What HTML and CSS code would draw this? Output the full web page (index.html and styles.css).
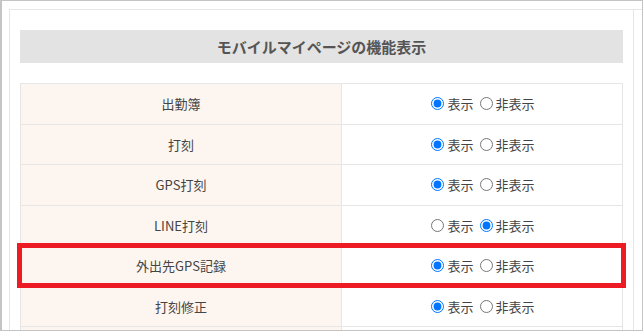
FILE: index.html
```html
<!DOCTYPE html>
<html lang="ja">
<head>
    <meta charset="UTF-8">
    <meta name="viewport" content="width=device-width, initial-scale=1.0">
    <title>モバイルマイページの機能表示</title>
    <link rel="stylesheet" href="styles.css">
</head>
<body>
    <div class="frame">
        <div class="panel">
            <div class="panel-body">
                <h2 class="section-title">モバイルマイページの機能表示</h2>
                <div class="table-wrap">
                    <table class="settings">
                        <tr>
                            <th>出勤簿</th>
                            <td>
                                <div class="choices">
                                    <label><input type="radio" name="r1" checked>表示</label>
                                    <label><input type="radio" name="r1">非表示</label>
                                </div>
                            </td>
                        </tr>
                        <tr>
                            <th>打刻</th>
                            <td>
                                <div class="choices">
                                    <label><input type="radio" name="r2" checked>表示</label>
                                    <label><input type="radio" name="r2">非表示</label>
                                </div>
                            </td>
                        </tr>
                        <tr>
                            <th>GPS打刻</th>
                            <td>
                                <div class="choices">
                                    <label><input type="radio" name="r3" checked>表示</label>
                                    <label><input type="radio" name="r3">非表示</label>
                                </div>
                            </td>
                        </tr>
                        <tr>
                            <th>LINE打刻</th>
                            <td>
                                <div class="choices">
                                    <label><input type="radio" name="r4">表示</label>
                                    <label><input type="radio" name="r4" checked>非表示</label>
                                </div>
                            </td>
                        </tr>
                        <tr>
                            <th>外出先GPS記録</th>
                            <td>
                                <div class="choices">
                                    <label><input type="radio" name="r5" checked>表示</label>
                                    <label><input type="radio" name="r5">非表示</label>
                                </div>
                            </td>
                        </tr>
                        <tr>
                            <th>打刻修正</th>
                            <td>
                                <div class="choices">
                                    <label><input type="radio" name="r6" checked>表示</label>
                                    <label><input type="radio" name="r6">非表示</label>
                                </div>
                            </td>
                        </tr>
                        <tr>
                            <th>&nbsp;</th>
                            <td>&nbsp;</td>
                        </tr>
                    </table>
                    <div class="highlight"></div>
                </div>
            </div>
        </div>
    </div>
</body>
</html>
```

FILE: styles.css
```css
body {
    margin: 0;
    height: 332px;
    overflow: hidden;
    background: #fff;
    font-family: "Noto Sans CJK JP", "Noto Sans", sans-serif;
    color: #444;
}
.frame {
    box-sizing: border-box;
    height: 331px;
    overflow: hidden;
    border: 1px solid #c4c4c4;
    border-left-width: 2px;
    padding: 8px 0 0 7px;
}
.panel {
    border-top: 1px solid #e6e6e6;
    border-left: 1px solid #e6e6e6;
    height: 400px;
}
.panel-body {
    padding: 20px 10px 0 10px;
    margin-right: 8px;
    border-right: 1px solid #e6e6e6;
    height: 400px;
}
.section-title {
    margin: 0 0 20px 0;
    height: 33px;
    line-height: 33px;
    background: #e3e3e3;
    color: #555;
    font-size: 15px;
    font-weight: bold;
    text-align: center;
}
.table-wrap {
    position: relative;
}
.settings {
    width: 100%;
    border-collapse: collapse;
    font-size: 13px;
}
.settings th,
.settings td {
    border: 1px solid #e6e6e6;
    height: 39.5px;
    padding: 0;
    text-align: center;
    font-weight: normal;
}
.settings th {
    width: 320px;
    background: #fdf5ef;
    color: #444;
}
.choices {
    display: flex;
    justify-content: center;
    align-items: center;
    gap: 6px;
    padding-left: 2px;
}
.choices label {
    display: flex;
    align-items: center;
}
.choices input {
    width: 13px;
    height: 13px;
    margin: 0 3px 0 0;
}
.highlight {
    position: absolute;
    left: -3px;
    right: -3px;
    top: 160px;
    height: 35px;
    border: 5px solid #ed1c24;
}
```
